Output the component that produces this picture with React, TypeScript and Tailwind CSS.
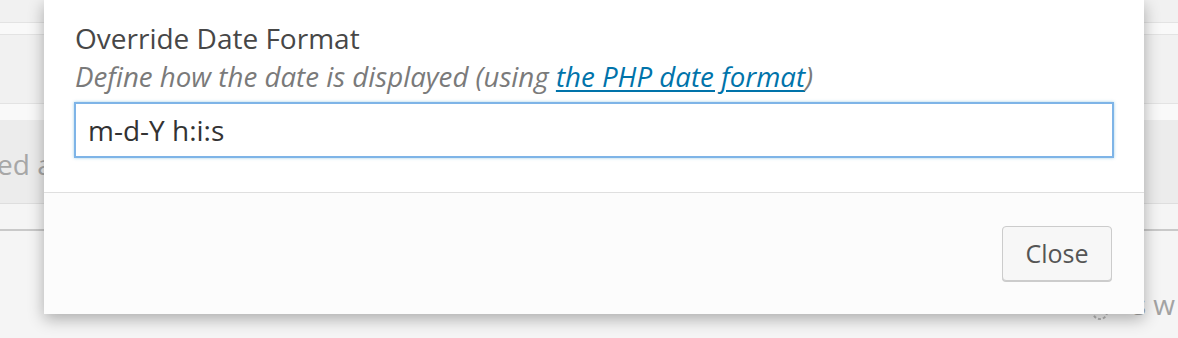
import { useState } from "react";

export default function App() {
  const [format, setFormat] = useState("m-d-Y h:i:s");

  return (
    <div
      className="relative w-full h-[338px] overflow-hidden bg-[#f5f5f5]"
      style={{ fontFamily: '"Open Sans", "Noto Sans", sans-serif' }}
    >
      {/* page behind the modal */}
      <div className="flex flex-col">
        <div className="h-[23px] bg-[#f1f1f1] border-b border-[#e3e3e3]" />
        <div className="h-[12px] bg-[#f9f9f9] border-b border-[#e3e3e3]" />
        <div className="h-[69px] bg-[#f1f1f1] border-b border-[#e3e3e3]" />
        <div className="h-[16px] bg-[#f9f9f9]" />
        <div className="h-[84px] bg-[#ececec] border-b border-[#dedede] flex items-center">
          <span className="-ml-[3px] pt-[4px] text-[28px] text-[#a7a7a7] leading-none">ed a</span>
        </div>
        <div className="h-[27px] bg-[#f5f5f5] border-b-2 border-[#c9c9c9]" />
        <div className="h-[106px] bg-[#f5f5f5] flex justify-end items-start pt-[59px]">
          <span className="mr-[3px] text-[28px] text-[#a3a3a3] leading-none">s w</span>
        </div>
      </div>

      {/* spinner tucked under the modal edge */}
      <svg
        className="absolute left-[1091px] top-[303px]"
        width="18"
        height="18"
        viewBox="0 0 18 18"
      >
        <circle cx="9" cy="9" r="7" fill="none" stroke="#b8b8b8" strokeWidth="2" strokeDasharray="3 2" />
      </svg>

      {/* modal */}
      <div className="absolute left-[44px] top-0 w-[1100px] h-[314px] bg-white flex flex-col shadow-[0_5px_15px_rgba(0,0,0,0.3)]">
        <div className="h-[192px] px-[30px] pt-[19px]">
          <label className="block pl-[1px] text-[28px] leading-[38px] text-[#474747]">
            Override Date Format
          </label>
          <p className="pl-[1px] text-[27.7px] leading-[38px] italic text-[#7a7a7a]">
            Define how the date is displayed (using{" "}
            <a href="#" className="text-[#0073aa] underline underline-offset-[3px]">
              the PHP date format
            </a>
            )
          </p>
          <input
            value={format}
            onChange={(e) => setFormat(e.target.value)}
            className="mt-[7px] w-full h-[56px] px-[12px] border-2 border-[#7eb4e7] text-[28px] text-[#333] outline-none shadow-[0_0_3px_rgba(30,140,190,0.4)]"
          />
        </div>
        <div className="flex-1 bg-[#fcfcfc] border-t border-[#dfdfdf] flex justify-end items-start pt-[33px] pr-[32px]">
          <button className="w-[110px] h-[55px] rounded-[4px] border border-[#cccccc] bg-[#f7f7f7] text-[25px] text-[#555] shadow-[0_1px_0_#cccccc]">
            Close
          </button>
        </div>
      </div>
    </div>
  );
}
